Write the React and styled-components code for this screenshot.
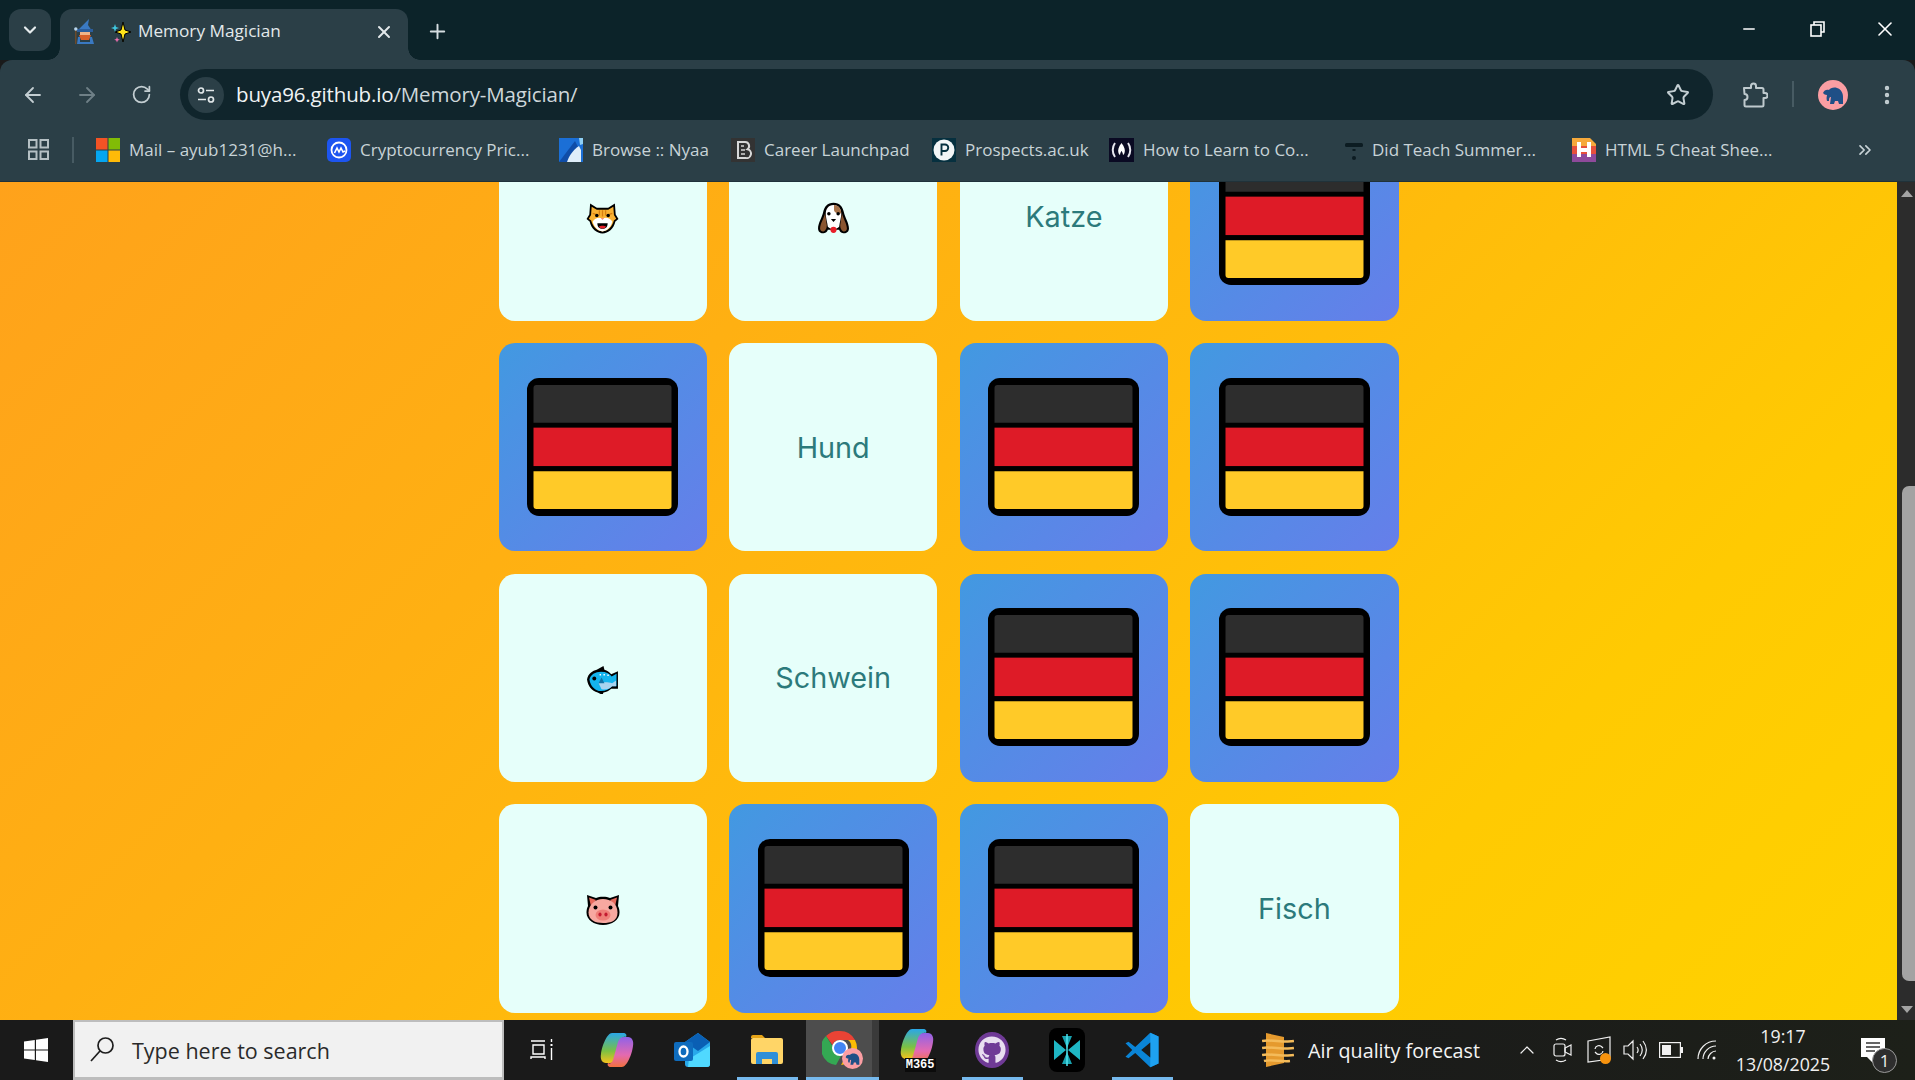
import React from "react";
import styled, { createGlobalStyle } from "styled-components";
import { ArrowLeft, ArrowRight, RotateCw, Star, EllipsisVertical, ChevronDown, ChevronUp, X, Plus, Minus, ChevronsRight } from "lucide-react";
import { FaGithub } from "react-icons/fa";

const UI_FONT = `"Open Sans", "Noto Sans", "Liberation Sans", sans-serif`;

const Global = createGlobalStyle`
  html, body { margin: 0; height: 100%; overflow: hidden; background: #1a1a1a; }
  #root { height: 100%; }
  * { box-sizing: border-box; }
`;

const Shell = styled.div`
  width: 100%; height: 100vh; display: flex; flex-direction: column; overflow: hidden;
  font-family: ${UI_FONT};
`;

/* ---------- browser chrome ---------- */
const TabStrip = styled.div`
  height: 60px; flex: none; background: #0c2329; display: flex; align-items: flex-start; padding: 9px 0 0 9px;
`;
const TabListButton = styled.div`
  width: 42px; height: 42px; border-radius: 12px; background: #2b3f47; color: #e6ecee;
  display: flex; align-items: center; justify-content: center; margin-right: 9px;
`;
const Tab = styled.div`
  position: relative; width: 348px; height: 51px; background: #2b3f47; border-radius: 12px 12px 0 0;
  display: flex; align-items: center; padding: 0 0 5px 14px; color: #e3e9eb;
  &::before, &::after { content: ""; position: absolute; bottom: 0; width: 12px; height: 12px; }
  &::before { left: -12px; background: radial-gradient(circle at 0 0, #0c2329 11.5px, #2b3f47 12px); }
  &::after { right: -12px; background: radial-gradient(circle at 100% 0, #0c2329 11.5px, #2b3f47 12px); }
`;
const TabGap = styled.span`
  width: 17px; flex: none;
`;
const TabTitle = styled.span`
  font-size: 17.2px; line-height: 22px; padding-bottom: 2px; white-space: nowrap; margin-left: 7px; width: 235.5px;
`;
const NewTab = styled.div`
  width: 58px; height: 44px; display: flex; align-items: center; justify-content: center; color: #d5dde0;
`;
const WindowControls = styled.div`
  margin-left: auto; margin-right: -4px; margin-top: -9px; display: flex;
`;
const WindowControl = styled.div`
  width: 68px; height: 58px; display: flex; align-items: center; justify-content: center; color: #fff;
`;

const Toolbar = styled.div`
  height: 69px; flex: none; background: #2b3f47; display: flex; align-items: flex-start; padding: 9px 1px 0 6px;
  border-radius: 12px 12px 0 0; position: relative;
`;
const ToolButton = styled.div`
  width: 54px; height: 51px; flex: none; display: flex; align-items: center; justify-content: center;
  color: ${p => (p.$dim ? "#6f8087" : "#c3ced2")};
`;
const UrlBar = styled.div`
  flex: 1; height: 51px; margin: 0 15px 0 12px; border-radius: 26px; background: #10252c;
  display: flex; align-items: center; padding: 0 23px 0 8px;
`;
const SiteInfo = styled.div`
  width: 36px; height: 36px; border-radius: 50%; background: #2b3f47; display: flex; align-items: center; justify-content: center; flex: none;
`;
const Url = styled.div`
  margin-left: 12px; padding-bottom: 2px; font-size: 20.5px; color: #ced7da; white-space: nowrap; letter-spacing: -0.15px; flex: 1;
  b { font-weight: 400; color: #f0f4f5; }
`;
const ToolSeparator = styled.div`
  width: 2px; height: 26px; background: #475b63; margin: 12px 12px 0 10px; flex: none;
`;
const Avatar = styled.div`
  width: 30px; height: 30px; border-radius: 50%; background: #fb9ea3; display: flex; align-items: center; justify-content: center;
`;

const BookmarkBar = styled.div`
  height: 53px; flex: none; background: #2b3f47; display: flex; align-items: center; padding: 0 0 11px 28px;
  border-bottom: 1px solid #20323a; color: #c8d3d7;
`;
const BarSeparator = styled.div`
  width: 2px; height: 26px; background: #475b63; margin: 0 22px 0 23px; flex: none;
`;
const Bookmark = styled.div`
  display: flex; align-items: center; gap: 9px; width: ${p => p.$w}px; flex: none; font-size: 17px; white-space: nowrap;
`;
const Overflow = styled.div`
  margin-left: auto; margin-right: 40px; display: flex; color: #c8d3d7;
`;

/* ---------- page ---------- */
const Viewport = styled.div`
  flex: 1; min-height: 0; display: flex; overflow: hidden;
`;
const Page = styled.main`
  flex: 1; min-width: 0; overflow: hidden;
  background: linear-gradient(135deg, #ffa21b 0%, #ffb012 32%, #ffbc0b 54%, #ffca02 77%, #ffd200 100%);
`;
const Board = styled.div`
  width: 900px; margin: -69.4px auto 0; display: grid; grid-template-columns: repeat(4, 1fr); gap: 22.4px;
`;
const Card = styled.div`
  aspect-ratio: 1; border-radius: 16px; display: flex; align-items: center; justify-content: center;
  background: ${p => (p.$back ? "linear-gradient(135deg, #4299e1, #667eea)" : "#e6fffa")};
  color: #2c7a7b; font-family: Inter, "Noto Sans", sans-serif; font-size: 28.8px;
`;
const FlagWrap = styled.span`
  display: flex; margin-bottom: 1px;
`;
const Emoji = styled.span`
  display: flex; margin-top: 3px;
`;
const Scrollbar = styled.div`
  width: 18px; flex: none; background: #2c2c2c; position: relative; display: flex; flex-direction: column; align-items: flex-end;
`;
const ScrollArrow = styled.div`
  width: 0; height: 0; position: absolute; left: 4px; border-left: 6px solid transparent; border-right: 6px solid transparent;
  ${p => (p.$down ? "bottom: 7px; border-top: 7px solid #a3a3a3;" : "top: 8px; border-bottom: 7px solid #a3a3a3;")}
`;
const ScrollThumb = styled.div`
  width: 13px; height: 495px; margin-top: 304px; background: #a3a3a3; border-radius: 7px 0 0 7px;
`;

/* ---------- taskbar ---------- */
const Taskbar = styled.footer`
  height: 60px; flex: none; display: flex; align-items: stretch; color: #fff;
  background: linear-gradient(90deg, #1a1a1a 0%, #1a1a1a 65%, #1d2019 100%);
`;
const StartButton = styled.div`
  width: 73px; display: flex; align-items: center; justify-content: center; padding-right: 2px;
`;
const SearchBox = styled.div`
  width: 431px; background: #f1f1f1; border: 2px solid #bdbdbd; border-bottom-width: 3px; display: flex; align-items: center; padding-left: 15px; gap: 17px;
  color: #2a2a2a; font-size: 21.5px; white-space: nowrap;
  span { padding-top: 2px; }
`;
const TaskSlot = styled.div`
  position: relative; width: 75px; flex: none; display: flex; align-items: center; justify-content: center;
  background: ${p => (p.$active ? "linear-gradient(90deg, transparent 2px, #4d4d4d 2px, #4d4d4d 68px, #3a3a3a 68px)" : "transparent")};
  ${p => p.$open && `&::after { content: ""; position: absolute; bottom: 0; height: 3px; background: #76b9ed;
     left: ${p.$active ? "2px" : "8px"}; right: ${p.$active ? "0" : "6px"}; }`}
`;
const Tray = styled.div`
  margin-left: auto; display: flex; align-items: center;
`;
const Weather = styled.div`
  width: 218px; margin-right: 29px; display: flex; align-items: center; gap: 14px; font-size: 19.7px; white-space: nowrap; color: #f4f4f4;
`;
const TrayIcon = styled.div`
  width: 36px; height: 60px; display: flex; align-items: center; justify-content: center; color: #f0f0f0;
`;
const Clock = styled.div`
  width: 116px; text-align: center; font-size: 17.8px; line-height: 28px; color: #f0f0f0;
`;
const Notifications = styled.div`
  position: relative; width: 74px; height: 60px; display: flex; align-items: center; padding-left: 20px;
`;
const NotifBadge = styled.span`
  position: absolute; left: 31px; top: 28px; width: 25px; height: 25px; border-radius: 50%; background: #2e2e2e; border: 1px solid #9a9a9a;
  display: flex; align-items: center; justify-content: center; font-size: 17px; color: #f0f0f0;
`;
const M365Box = styled.div`
  position: relative; width: 36px; height: 44px;
`;
const M365Tag = styled.span`
  position: absolute; right: -1px; bottom: 0; background: #0b0b0b; color: #fff; font-size: 12px; line-height: 14px; padding: 0 1px; font-family: "Liberation Mono", monospace; font-weight: 700;
`;
const ChromeBox = styled.div`
  position: relative; width: 40px; height: 40px;
`;
const AvatarBadge = styled.span`
  position: absolute; right: -1px; bottom: 1px; width: 21px; height: 21px; border-radius: 50%; background: #fb9ea3; display: flex; align-items: center; justify-content: center;
`;
const GithubDisc = styled.span`
  width: 34px; height: 36px; border-radius: 50%; background: #6f3a96; display: flex; align-items: center; justify-content: center;
`;
const SyncBox = styled.div`
  position: relative; width: 24px; height: 28px;
`;
const UpdateDot = styled.span`
  position: absolute; right: 0; bottom: 0; width: 11px; height: 11px; border-radius: 50%; background: #f7930e;
`;

/* ---------- drawings ---------- */
const Flag = () => (
  <svg width="151" height="138" viewBox="0 0 151 139" preserveAspectRatio="none">
    <rect width="151" height="139" rx="12" fill="#000" />
    <path d="M6.500 10a3 3 0 0 1 3-3h132a3 3 0 0 1 3 3v35h-138z" fill="#2d2d2d" />
    <rect x="6.500" y="50" width="138" height="38.700" fill="#de1b27" />
    <path d="M6.500 94h138v35a3 3 0 0 1-3 3h-132a3 3 0 0 1-3-3z" fill="#ffca28" />
  </svg>
);
const Cat = () => (
  <svg width="33" height="33" viewBox="0 0 32 32">
    <path d="M4 1.500l6.500 4h11L28 1.500l.8 10.500 2.700 4.500-3 2.500C27 26 21.500 30.500 16 30.500S5 26 3.500 19l-3-2.500L3.200 12z" fill="#000" />
    <path d="M5.500 4.500l5 3h11l5-3 .6 8 2.200 3.800-2.300 1.700C25.500 24 21 28.500 16 28.500S6.500 24 5 18L2.700 16.300 4.900 12.500z" fill="#f9b233" />
    <path d="M13 8v5M16 8v6M19 8v5M6.500 11l3 1M25.500 11l-3 1" stroke="#d97f10" strokeWidth="1.300" />
    <path d="M6.500 19c2-3.500 6-4.500 9.500-3 3.500-1.500 7.500-.5 9.500 3-1 5-5 9.500-9.500 9.500S7.500 24 6.500 19z" fill="#fff" />
    <circle cx="10.500" cy="13" r="1.700" fill="#000" /><circle cx="21.500" cy="13" r="1.700" fill="#000" />
    <path d="M14.300 15.500h3.400L16 17.500z" fill="#f58a78" />
    <path d="M11 20.500h10c0 3.500-2 5.500-5 5.500s-5-2-5-5.500z" fill="#000" />
    <path d="M12.500 24c1.500-1.300 5.500-1.300 7 0-.8 1.300-2.300 1.700-3.500 1.700s-2.700-.4-3.500-1.700z" fill="#e8202a" />
  </svg>
);
const Dog = () => (
  <svg width="33" height="33" viewBox="0 0 32 32">
    <path d="M16 .8c-6 0-9 4-10 9-1 5-5 11-5 16 0 3.500 3 5 5.500 4.500 2.500-.5 3.500-2 4-3.500h11c.5 1.500 1.500 3 4 3.500 2.500.5 5.500-1 5.500-4.500 0-5-4-11-5-16-1-5-4-9-10-9z" fill="#000" />
    <path d="M7.800 11c-1 5-4.800 10-4.800 14.800 0 2.300 2 3.200 3.500 2.700 2-1 3-3 3-6z" fill="#8a5530" />
    <path d="M24.200 11c1 5 4.800 10 4.800 14.800 0 2.300-2 3.200-3.500 2.700-2-1-3-3-3-6z" fill="#8a5530" />
    <path d="M16 2.800c-5 0-7.500 4-7.500 8.700 0 4 1.500 8 2 12.500 1.500 1.500 3.500 2.500 5.500 2.500s4-1 5.500-2.500c.5-4.500 2-8.500 2-12.500 0-4.700-2.500-8.700-7.500-8.700z" fill="#fff" />
    <path d="M16.500 2.800c4.500 0 7 4 7 8.200-2 1-6.500 0-7-3z" fill="#a9744a" />
    <circle cx="11.500" cy="11.500" r="1.700" fill="#000" /><circle cx="20.500" cy="11.500" r="1.700" fill="#000" />
    <path d="M13.500 16.500h5L16 19.500z" fill="#000" />
    <circle cx="16" cy="27" r="3" fill="#e8202a" />
  </svg>
);
const Fish = () => (
  <svg width="33" height="29" viewBox="0 0 34 30">
    <path d="M1 15c1-6 6-9 10-10l7-4 1 4c3 1 5 2.500 7 4.500l7-3v18h-7c-2 2-5 3.500-8 4l-1 2.500-5-2.500C6 27 2 22 1 15z" fill="#000" />
    <path d="M3.500 15c1-5 6-8 12-8 5 0 9 2 11 5l5-3v13h-5c-2 3-6 5-11 5-6 0-11-5-12-12z" fill="#14b4ee" />
    <path d="M13 19c4-1.500 10-1.500 14 0l4-3v6h-4c-3 3-7 4-11 3z" fill="#a9d3f0" />
    <path d="M16 13l3 6h-6z" fill="#1273a8" />
    <circle cx="8.500" cy="14" r="2" fill="#000" />
    <path d="M14 10h1.500M18 10h1.500M22 10.500h1.500" stroke="#fff" strokeWidth="1.600" />
  </svg>
);
const Pig = () => (
  <svg width="34" height="32" viewBox="0 0 34 32">
    <path d="M1 1l9 3c2-.8 4-1.200 7-1.200s5 .4 7 1.200l9-3-1 11c1 2 1.500 4 1.500 6.500C33.500 26 26 31 17 31S.5 26 .5 18.500c0-2.500.5-4.500 1.500-6.500z" fill="#000" />
    <path d="M3 3.500l7 2.500-5 6.500zM31 3.500l-7 2.500 5 6.500z" fill="#e8695c" />
    <path d="M17 5c8 0 14.500 5 14.500 13.500S25 29 17 29 2.500 26 2.500 18.500 9 5 17 5z" fill="#f7a8a0" />
    <ellipse cx="17" cy="21" rx="7.500" ry="5.500" fill="#ef7f78" />
    <ellipse cx="14" cy="20.500" rx="1.600" ry="1.900" fill="#c41a30" /><ellipse cx="20" cy="20.500" rx="1.600" ry="1.900" fill="#c41a30" />
    <circle cx="9.500" cy="13.500" r="2" fill="#000" /><circle cx="24.500" cy="13.500" r="2" fill="#000" />
  </svg>
);

const Wizard = () => (
  <svg width="20" height="26" viewBox="0 0 20 26">
    <path d="M4 11 L15 0 L14 6 L18 12z" fill="#3a79c2" />
    <rect x="3" y="10" width="16" height="3" fill="#2b5d9c" />
    <rect x="6" y="13" width="10" height="4" fill="#f0b48a" />
    <path d="M5 16h12l-2 5H7z" fill="#d8602a" />
    <path d="M4 18h2v5h10v-5h2l2 7H3z" fill="#3a79c2" />
    <rect x="1" y="10" width="1.500" height="15" fill="#6b4a2a" />
    <circle cx="1.800" cy="10" r="1.700" fill="#b9d5ea" />
  </svg>
);
const Sparkle = () => (
  <svg width="20" height="24" viewBox="0 0 20 24">
    <path d="M12 2l2 8 6 2-6 2-2 8-2-8-6-2 6-2z" fill="#ffe41a" stroke="#000" strokeWidth="1" />
    <path d="M4 4l1 3 3 1-3 1-1 3-1-3-3-1 3-1z" fill="#3fc7e0" />
    <path d="M6 17l.8 2 2 .8-2 .8-.8 2-.8-2-2-.8 2-.8z" fill="#ef6fb0" />
  </svg>
);
const SiteTune = () => (
  <svg width="20" height="20" viewBox="0 0 20 20" fill="none" stroke="#e2e8ea" strokeWidth="1.700">
    <circle cx="5" cy="5.500" r="2.500" /><path d="M10 5.500h8M2 14.500h8" /><circle cx="15" cy="14.500" r="2.500" />
  </svg>
);
const ExtensionIcon = () => (
  <svg width="26" height="28" viewBox="0 0 26 28" fill="none" stroke="#bfcace" strokeWidth="2" strokeLinejoin="round">
    <path d="M2 7h7V5a2.500 2.500 0 0 1 5 0v2h6a1.500 1.500 0 0 1 1.500 1.500V12h1.500a2.500 2.500 0 0 1 0 5h-1.500v7a1.500 1.500 0 0 1-1.500 1.500H4a1.500 1.500 0 0 1-1.500-1.500v-5a2.500 2.500 0 0 0 0-6z" />
  </svg>
);
const Elephant = ({ size = 22 }) => (
  <svg width={size} height={size} viewBox="0 0 22 22">
    <path d="M1 9c1-3 4-4 6-3 1-2 5-3 8-2 4 1 6 5 6 9v7h-4l-1-3h-3l-1 3H8l1-7c-2 0-2 2-2 4H5c-1-3 0-5 0-6-2 0-3-1-4-2z" fill="#1f4f86" />
  </svg>
);
const AppsGrid = () => (
  <svg width="21" height="21" viewBox="0 0 21 21" fill="none" stroke="#b5c0c4" strokeWidth="2">
    <rect x="1" y="1" width="7.500" height="7.500" /><rect x="12.500" y="1" width="7.500" height="7.500" />
    <rect x="1" y="12.500" width="7.500" height="7.500" /><rect x="12.500" y="12.500" width="7.500" height="7.500" />
  </svg>
);
const MsLogo = () => (
  <svg width="24" height="24" viewBox="0 0 24 24">
    <rect width="11.500" height="11.500" fill="#f35325" /><rect x="12.500" width="11.500" height="11.500" fill="#81bc06" />
    <rect y="12.500" width="11.500" height="11.500" fill="#05a6f0" /><rect x="12.500" y="12.500" width="11.500" height="11.500" fill="#ffba08" />
  </svg>
);
const CmcLogo = () => (
  <svg width="24" height="24" viewBox="0 0 24 24">
    <rect width="24" height="24" rx="5" fill="#1d55f0" />
    <circle cx="12" cy="12" r="7.500" fill="none" stroke="#fff" strokeWidth="1.800" />
    <path d="M7.500 15l2.500-5 2 4 2-4 2 4 2-1" fill="none" stroke="#fff" strokeWidth="1.600" />
  </svg>
);
const NyaaLogo = () => (
  <svg width="24" height="24" viewBox="0 0 24 24">
    <rect width="24" height="24" fill="#1b6fd6" />
    <path d="M0 24L16 3l3 6-8 15z" fill="#0f4da8" />
    <path d="M8 24c2-6 6-12 12-16l2 4v12z" fill="#dfeefa" />
    <path d="M20 0h4v6l-3 1z" fill="#8fd0f5" />
  </svg>
);
const BLogo = () => (
  <svg width="24" height="24" viewBox="0 0 24 24">
    <rect width="24" height="24" fill="#333" />
    <path d="M7 4h7a4 4 0 0 1 2.500 7.200A4.500 4.500 0 0 1 14.500 20H7z" fill="none" stroke="#d8d8d8" strokeWidth="2" />
    <path d="M10 8h3M10 12h4M10 16h4" stroke="#d8d8d8" strokeWidth="1.500" />
  </svg>
);
const PLogo = () => (
  <svg width="24" height="24" viewBox="0 0 24 24">
    <rect width="24" height="24" fill="#06303f" /><circle cx="12" cy="12" r="10.500" fill="#f2f5f6" />
    <path d="M9.500 17.500v-11h3.500a3.200 3.200 0 0 1 0 6.500H9.500" fill="none" stroke="#06303f" strokeWidth="1.900" />
  </svg>
);
const FccLogo = () => (
  <svg width="25" height="24" viewBox="0 0 25 24" fill="none">
    <rect width="25" height="24" fill="#0a0a23" />
    <path d="M6 5c-3 4-3 10 0 14M19 5c3 4 3 10 0 14" stroke="#e6e6ee" strokeWidth="2" />
    <path d="M12.500 5c3 4 4 7 3 10-.5 1.500-1.500 2-1.500 2 0-2-1.500-4-1.500-4s-1.500 2-1.500 4c0 0-1-.5-1.500-2-1-3 0-6 3-10z" fill="#fff" />
  </svg>
);
const DidLogo = () => (
  <svg width="18" height="24" viewBox="0 0 18 24">
    <rect x="0" y="5" width="18" height="4" rx="1.500" fill="#0c1c22" />
    <circle cx="9" cy="20" r="2" fill="#0c1c22" />
    <rect x="7.500" y="11" width="3" height="2" fill="#0c1c22" />
  </svg>
);
const HLogo = () => (
  <svg width="24" height="24" viewBox="0 0 24 24">
    <path d="M0 0h18l6 6v2H0z" fill="#f6a93b" /><rect y="8" width="24" height="8" fill="#e7503d" /><rect y="16" width="24" height="8" fill="#8e4a9b" />
    <path d="M5 4h4v6h6V4h4v15h-4v-5H9v5H5z" fill="#fff" />
  </svg>
);

const WindowsLogo = () => (
  <svg width="24" height="24" viewBox="0 0 24 24" fill="#fff">
    <path d="M0 3.400l10.800-1.500V11.500H0zM12 1.700L24 0v11.500H12zM0 12.500h10.800v9.600L0 20.600zM12 12.500h12V24l-12-1.700z" />
  </svg>
);
const SearchGlass = () => (
  <svg width="25" height="27" viewBox="0 0 25 27" fill="none" stroke="#1e1e1e" strokeWidth="1.700">
    <circle cx="15.500" cy="9.500" r="7.500" /><path d="M10 15L1 25" />
  </svg>
);
const TaskView = () => (
  <svg width="24" height="24" viewBox="0 0 24 24" fill="none" stroke="#fff" strokeWidth="1.400">
    <path d="M1 3h14M1 21v-2h14v2M3 7h11v9H3zM21.500 1v3M21.500 10v12" /><rect x="20.500" y="6" width="2" height="2" fill="#fff" stroke="none" />
  </svg>
);
const Copilot = () => (
  <svg width="36" height="36" viewBox="0 0 36 36">
    <defs>
      <linearGradient id="cpA" x1="0" y1="0" x2="0" y2="1"><stop offset="0" stopColor="#2aa7e8" /><stop offset=".6" stopColor="#7bc043" /><stop offset="1" stopColor="#f6c21c" /></linearGradient>
      <linearGradient id="cpB" x1="0" y1="0" x2="0" y2="1"><stop offset="0" stopColor="#8f62e8" /><stop offset=".6" stopColor="#e46ab0" /><stop offset="1" stopColor="#f2713f" /></linearGradient>
    </defs>
    <path d="M13 1h11c3 0 4 2 3 4-2-1-4 0-5 3l-5 18c-1 3-3 5-6 5H7C3 31 1 27 2 22 3 14 8 1 13 1z" fill="url(#cpA)" />
    <path d="M23 35H12c-3 0-4-2-3-4 2 1 4 0 5-3l5-18c1-3 3-5 6-5h4c4 0 6 4 5 9-1 8-6 21-11 21z" fill="url(#cpB)" />
  </svg>
);
const M365 = () => (
  <M365Box>
    <Copilot />
    <M365Tag>M365</M365Tag>
  </M365Box>
);
const Outlook = () => (
  <svg width="36" height="36" viewBox="0 0 36 36">
    <path d="M11 10L24 1l12 9v22a3 3 0 0 1-3 3H14a3 3 0 0 1-3-3z" fill="#28a8ea" />
    <path d="M11 10L24 1l12 9-12 9z" fill="#0a5fb4" />
    <path d="M15 27l21-13v18a3 3 0 0 1-3 3H14z" fill="#50d9ff" />
    <rect y="10" width="19" height="19" rx="2" fill="#0f6cbd" />
    <ellipse cx="9.500" cy="19.500" rx="4" ry="5" fill="none" stroke="#fff" strokeWidth="2.300" />
  </svg>
);
const Explorer = () => (
  <svg width="32" height="32" viewBox="0 0 32 32">
    <path d="M0 3a2 2 0 0 1 2-2h9l3 3h-14z" fill="#e6a418" />
    <rect y="4" width="32" height="26" rx="2" fill="#ffd567" />
    <path d="M5 30V20a2 2 0 0 1 2-2h18a2 2 0 0 1 2 2v10h-6v-5H11v5z" fill="#2f8fd8" />
  </svg>
);
const ChromeIcon = () => (
  <ChromeBox>
    <svg width="36" height="36" viewBox="0 0 36 36">
      <path d="M18 1a17 17 0 0 1 15 9H18a8 8 0 0 0-7.500 5L4 6a17 17 0 0 1 14-5z" fill="#ea4335" />
      <path d="M33 10a17 17 0 0 1-14 25l7-12a8 8 0 0 0 0-13z" fill="#fbbc04" />
      <path d="M4 6l7 11a8 8 0 0 0 8 9l-5 9A17 17 0 0 1 4 6z" fill="#34a853" />
      <circle cx="18" cy="18" r="7" fill="#4285f4" stroke="#fff" strokeWidth="2" />
    </svg>
    <AvatarBadge><Elephant size={15} /></AvatarBadge>
  </ChromeBox>
);
const GithubIcon = () => (
  <GithubDisc><FaGithub size={28} color="#e8def0" /></GithubDisc>
);
const StarApp = () => (
  <svg width="36" height="44" viewBox="0 0 36 44">
    <rect width="36" height="44" rx="8" fill="#000" />
    <path d="M5 12l12 10L5 32zM31 12L19 22l12 10z" fill="#1fb6c4" />
    <path d="M13 8h10l-5 12zM13 36h10l-5-12z" fill="#18a3b0" />
    <path d="M18 6v32" stroke="#4fe3ee" strokeWidth="1.500" />
  </svg>
);
const VsCode = () => (
  <svg width="36" height="36" viewBox="0 0 24 24">
    <path d="M17.500 0.500 7.500 10 3 6.500 1 7.500 5.500 12 1 16.500l2 1L7.500 14l10 9.500 5.500-2.500V3z" fill="#0a84d6" />
    <path d="M17.500 0.500 23 3v18l-5.500 2.500z" fill="#1ea1f1" />
    <path d="M17.500 7 11.500 12l6 5z" fill="#1a1a1a" />
  </svg>
);
const AirQuality = () => (
  <svg width="32" height="36" viewBox="0 0 32 36">
    <path d="M4 1l18 4v26L4 35z" fill="#e59a2e" />
    <path d="M0 9c6-2 24 2 32 0M0 16c6-2 24 2 32 0M0 23c6-2 24 2 32 0M2 29c6-2 18 1 26 0" fill="none" stroke="#f4bb5a" strokeWidth="2.500" />
  </svg>
);
const TrayCamera = () => (
  <svg width="20" height="26" viewBox="0 0 20 26" fill="none" stroke="#f0f0f0" strokeWidth="1.200">
    <rect x="1" y="7" width="11" height="12" rx="2" /><path d="M12 11l6-3v10l-6-3zM3 3c3-2 7-2 10 0M3 23c3 2 7 2 10 0" />
  </svg>
);
const TraySync = () => (
  <SyncBox>
    <svg width="24" height="28" viewBox="0 0 24 28" fill="none" stroke="#f0f0f0" strokeWidth="1.200">
      <path d="M1 5l22-4v22L1 26z" /><path d="M8 13a4 4 0 0 1 7-2l1 1M16 15a4 4 0 0 1-7 2l-1-1" />
    </svg>
    <UpdateDot />
  </SyncBox>
);
const TraySpeaker = () => (
  <svg width="24" height="22" viewBox="0 0 24 22" fill="none" stroke="#f0f0f0" strokeWidth="1.200">
    <path d="M1 7h4l5-5v18l-5-5H1zM14 8c1.500 2 1.500 4 0 6M17 5c3 4 3 8 0 12M20 2c4.500 6 4.500 12 0 18" />
  </svg>
);
const TrayBattery = () => (
  <svg width="24" height="16" viewBox="0 0 24 16">
    <rect x=".6" y=".6" width="20.800" height="14.800" fill="none" stroke="#f0f0f0" strokeWidth="1.200" />
    <rect x="3" y="3" width="9" height="10" fill="#f0f0f0" /><rect x="22" y="5" width="2" height="6" fill="#f0f0f0" />
  </svg>
);
const TrayWifi = () => (
  <svg width="20" height="22" viewBox="0 0 20 22" fill="none" stroke="#f0f0f0" strokeWidth="1.200">
    <path d="M1 20C1 10 9 2 19 2M6 20c0-7 6-13 13-13M11 20c0-4 4-8 8-8" /><circle cx="17" cy="19" r="1.500" fill="#f0f0f0" stroke="none" />
  </svg>
);
const NotifIcon = () => (
  <svg width="24" height="32" viewBox="0 0 24 32">
    <path d="M0 4h24v19H12v6l-6-6H0z" fill="#fff" />
    <path d="M5 9h14M5 13h14M5 17h9" stroke="#333" strokeWidth="1.300" />
  </svg>
);

/* ---------- data ---------- */
const bookmarks = [
  { icon: <MsLogo />, label: "Mail – ayub1231@h...", w: 231 },
  { icon: <CmcLogo />, label: "Cryptocurrency Pric...", w: 232 },
  { icon: <NyaaLogo />, label: "Browse :: Nyaa", w: 172 },
  { icon: <BLogo />, label: "Career Launchpad", w: 201 },
  { icon: <PLogo />, label: "Prospects.ac.uk", w: 177 },
  { icon: <FccLogo />, label: "How to Learn to Co...", w: 236 },
  { icon: <DidLogo />, label: "Did Teach Summer...", w: 227 },
  { icon: <HLogo />, label: "HTML 5 Cheat Shee...", w: 220 },
];

const cards = [
  { icon: <Cat /> }, { icon: <Dog /> }, { text: "Katze" }, { back: true },
  { back: true }, { text: "Hund" }, { back: true }, { back: true },
  { icon: <Fish /> }, { text: "Schwein" }, { back: true }, { back: true },
  { icon: <Pig /> }, { back: true }, { back: true }, { text: "Fisch" },
];

const taskApps = [
  { icon: <Copilot /> }, { icon: <Outlook /> }, { icon: <Explorer />, open: true },
  { icon: <ChromeIcon />, open: true, active: true }, { icon: <M365 /> },
  { icon: <GithubIcon />, open: true }, { icon: <StarApp /> }, { icon: <VsCode />, open: true },
];

export default function App() {
  return (
    <Shell>
      <Global />
      <TabStrip>
        <TabListButton><ChevronDown size={20} strokeWidth={2.6} /></TabListButton>
        <Tab>
          <Wizard />
          <TabGap />
          <Sparkle />
          <TabTitle>Memory Magician</TabTitle>
          <X size={20} strokeWidth={2.4} />
        </Tab>
        <NewTab><Plus size={23} strokeWidth={2} /></NewTab>
        <WindowControls>
          <WindowControl><Minus size={18} strokeWidth={1.8} /></WindowControl>
          <WindowControl>
            <svg width="15" height="16" viewBox="0 0 15 16" fill="none" stroke="#fff" strokeWidth="1.600"><rect x="1" y="4" width="10" height="11" /><path d="M4 4V1h10v10h-3" /></svg>
          </WindowControl>
          <WindowControl><X size={24} strokeWidth={1.6} /></WindowControl>
        </WindowControls>
      </TabStrip>

      <Toolbar>
        <ToolButton><ArrowLeft size={24} strokeWidth={1.8} /></ToolButton>
        <ToolButton $dim><ArrowRight size={24} strokeWidth={1.8} /></ToolButton>
        <ToolButton><RotateCw size={21} strokeWidth={2} /></ToolButton>
        <UrlBar>
          <SiteInfo><SiteTune /></SiteInfo>
          <Url><b>buya96.github.io</b>/Memory-Magician/</Url>
          <Star size={24} color="#c3ced2" strokeWidth={2} />
        </UrlBar>
        <ToolButton><ExtensionIcon /></ToolButton>
        <ToolSeparator />
        <ToolButton><Avatar><Elephant /></Avatar></ToolButton>
        <ToolButton><EllipsisVertical size={24} strokeWidth={2.4} /></ToolButton>
      </Toolbar>

      <BookmarkBar>
        <AppsGrid />
        <BarSeparator />
        {bookmarks.map(b => (
          <Bookmark key={b.label} $w={b.w}>{b.icon}<span>{b.label}</span></Bookmark>
        ))}
        <Overflow><ChevronsRight size={20} /></Overflow>
      </BookmarkBar>

      <Viewport>
        <Page>
          <Board>
            {cards.map((c, i) => (
              <Card key={i} $back={c.back}>
                {c.back ? <FlagWrap><Flag /></FlagWrap> : c.icon ? <Emoji>{c.icon}</Emoji> : c.text}
              </Card>
            ))}
          </Board>
        </Page>
        <Scrollbar>
          <ScrollArrow />
          <ScrollThumb />
          <ScrollArrow $down />
        </Scrollbar>
      </Viewport>

      <Taskbar>
        <StartButton><WindowsLogo /></StartButton>
        <SearchBox><SearchGlass /><span>Type here to search</span></SearchBox>
        <TaskSlot><TaskView /></TaskSlot>
        {taskApps.map((a, i) => (
          <TaskSlot key={i} $open={a.open} $active={a.active}>{a.icon}</TaskSlot>
        ))}
        <Tray>
          <Weather><AirQuality /><span>Air quality forecast</span></Weather>
          <TrayIcon><ChevronUp size={24} strokeWidth={1.2} /></TrayIcon>
          <TrayIcon><TrayCamera /></TrayIcon>
          <TrayIcon><TraySync /></TrayIcon>
          <TrayIcon><TraySpeaker /></TrayIcon>
          <TrayIcon><TrayBattery /></TrayIcon>
          <TrayIcon><TrayWifi /></TrayIcon>
          <Clock>19:17<br />13/08/2025</Clock>
          <Notifications><NotifIcon /><NotifBadge>1</NotifBadge></Notifications>
        </Tray>
      </Taskbar>
    </Shell>
  );
}
